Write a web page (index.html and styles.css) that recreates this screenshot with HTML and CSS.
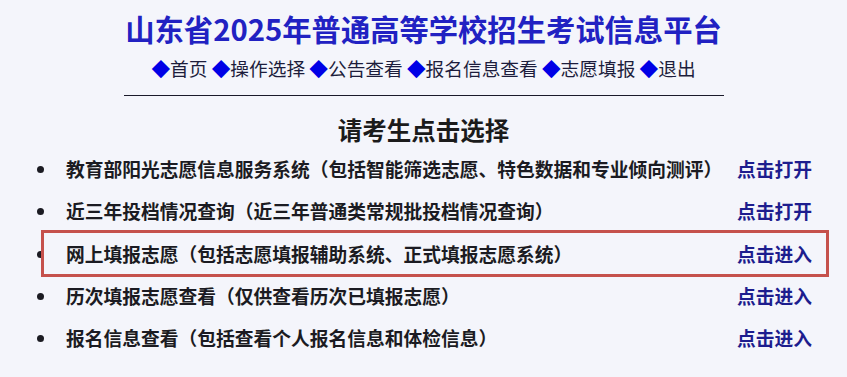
FILE: index.html
```html
<!DOCTYPE html>
<html lang="zh-CN">
<head>
    <meta charset="UTF-8">
    <title>山东省2025年普通高等学校招生考试信息平台</title>
    <link rel="stylesheet" href="styles.css">
</head>
<body>
    <h1 class="site-title">山东省2025年普通高等学校招生考试信息平台</h1>
    <div class="nav">
        <a href="#"><span class="dot">◆</span>首页</a>
        <a href="#"><span class="dot">◆</span>操作选择</a>
        <a href="#"><span class="dot">◆</span>公告查看</a>
        <a href="#"><span class="dot">◆</span>报名信息查看</a>
        <a href="#"><span class="dot">◆</span>志愿填报</a>
        <a href="#"><span class="dot">◆</span>退出</a>
    </div>
    <hr class="rule">

    <h2 class="choose">请考生点击选择</h2>

    <ul class="menu">
        <li>
            <div class="row">
                <span class="item-text">教育部阳光志愿信息服务系统（包括智能筛选志愿、特色数据和专业倾向测评）</span>
                <a class="go" href="#">点击打开</a>
            </div>
        </li>
        <li>
            <div class="row">
                <span class="item-text">近三年投档情况查询（近三年普通类常规批投档情况查询）</span>
                <a class="go" href="#">点击打开</a>
            </div>
        </li>
        <li class="marked">
            <div class="row">
                <span class="item-text">网上填报志愿（包括志愿填报辅助系统、正式填报志愿系统）</span>
                <a class="go" href="#">点击进入</a>
            </div>
        </li>
        <li>
            <div class="row">
                <span class="item-text">历次填报志愿查看（仅供查看历次已填报志愿）</span>
                <a class="go" href="#">点击进入</a>
            </div>
        </li>
        <li>
            <div class="row">
                <span class="item-text">报名信息查看（包括查看个人报名信息和体检信息）</span>
                <a class="go" href="#">点击进入</a>
            </div>
        </li>
    </ul>
</body>
</html>
```

FILE: styles.css
```css
body {
    margin: 0;
    padding-top: 8px;
    background: #f4f5fb;
    font-family: "Noto Sans CJK SC", "Noto Sans", sans-serif;
    color: #1b1b22;
}
.site-title {
    margin: 0;
    text-align: center;
    font-size: 29.3px;
    line-height: 40px;
    font-weight: bold;
    color: #2121c2;
}
.nav {
    margin-top: 8px;
    text-align: center;
    font-size: 18.7px;
    line-height: 24px;
}
.nav a {
    color: #1d1d3c;
    text-decoration: none;
}
.nav .dot {
    color: #0000e6;
}
.rule {
    width: 600px;
    margin: 15px auto 0;
    border: 0;
    border-top: 1px solid #1a1a2a;
    height: 0;
}
.choose {
    margin: 19px 0 0;
    text-align: center;
    font-size: 24.5px;
    line-height: 30px;
    font-weight: bold;
    color: #1b1b1b;
}
.menu {
    margin: 3px 0 0 58px;
    padding: 0;
    width: 754px;
    list-style: disc outside;
}
.menu li {
    padding-left: 8px;
    line-height: 42.25px;
    font-size: 18.75px;
    font-weight: bold;
}
.menu li::marker {
    font-size: 18px;
}
.row {
    display: flex;
    justify-content: space-between;
}
.menu .go {
    color: #1d1d8e;
    text-decoration: none;
}
.marked {
    position: relative;
}
.marked::after {
    content: "";
    position: absolute;
    left: -17px;
    right: -17px;
    top: -3px;
    bottom: -2px;
    border: 3px solid #c5514c;
    pointer-events: none;
}
```
